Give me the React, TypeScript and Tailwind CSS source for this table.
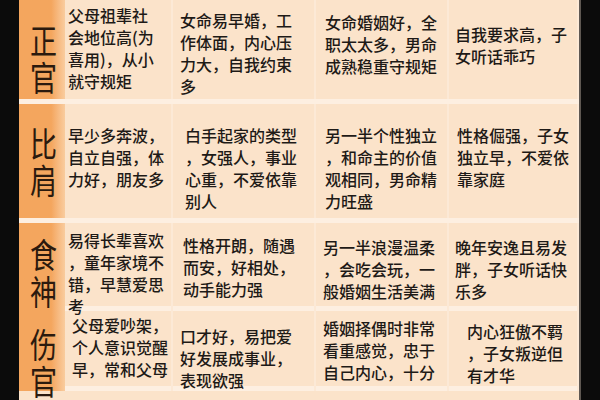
type Cell = { pad: string; lines: string[] };
type Row = { label: [string, string]; height: string; labelPad: string; cells: Cell[] };

const ROWS: Row[] = [
  {
    label: ['正', '官'],
    height: 'h-[104px]',
    labelPad: 'pt-[21px]',
    cells: [
      { pad: 'pt-[4px] pl-[3px]', lines: ['父母祖辈社', '会地位高(为', '喜用)，从小', '就守规矩'] },
      { pad: 'pt-[9px] pl-[7px]', lines: ['女命易早婚，工', '作体面，内心压', '力大，自我约束', '多'] },
      { pad: 'pt-[11px] pl-[9px]', lines: ['女命婚姻好，全', '职太太多，男命', '成熟稳重守规矩'] },
      { pad: 'pt-[23px] pl-[6px]', lines: ['自我要求高，子', '女听话乖巧'] },
    ],
  },
  {
    label: ['比', '肩'],
    height: 'h-[119px]',
    labelPad: 'pt-[20px]',
    cells: [
      { pad: 'pt-[20px] pl-[3px]', lines: ['早少多奔波，', '自立自强，体', '力好，朋友多'] },
      { pad: 'pt-[20px] pl-[12px]', lines: ['白手起家的类型', '，女强人，事业', '心重，不爱依靠', '别人'] },
      { pad: 'pt-[20px] pl-[9px]', lines: ['另一半个性独立', '，和命主的价值', '观相同，男命精', '力旺盛'] },
      { pad: 'pt-[20px] pl-[8px]', lines: ['性格倔强，子女', '独立早，不爱依', '靠家庭'] },
    ],
  },
  {
    label: ['食', '神'],
    height: 'h-[88px]',
    labelPad: 'pt-[12px]',
    cells: [
      { pad: 'pt-[6px] pl-[3px]', lines: ['易得长辈喜欢', '，童年家境不', '错，早慧爱思', '考'] },
      { pad: 'pt-[11px] pl-[10px]', lines: ['性格开朗，随遇', '而安，好相处，', '动手能力强'] },
      { pad: 'pt-[13px] pl-[7px]', lines: ['另一半浪漫温柔', '，会吃会玩，一', '般婚姻生活美满'] },
      { pad: 'pt-[13px] pl-[6px]', lines: ['晚年安逸且易发', '胖，子女听话快', '乐多'] },
    ],
  },
  {
    label: ['伤', '官'],
    height: 'h-[80px]',
    labelPad: 'pt-[14px]',
    cells: [
      { pad: 'pt-[3px] pl-[7px]', lines: ['父母爱吵架，', '个人意识觉醒', '早，常和父母'] },
      { pad: 'pt-[14px] pl-[7px]', lines: ['口才好，易把爱', '好发展成事业，', '表现欲强'] },
      { pad: 'pt-[6px] pl-[7px]', lines: ['婚姻择偶时非常', '看重感觉，忠于', '自己内心，十分'] },
      { pad: 'pt-[9px] pl-[18px]', lines: ['内心狂傲不羁', '，子女叛逆但', '有才华'] },
    ],
  },
];

const CJK = "font-['Noto_Sans_CJK_SC','Noto_Sans',sans-serif]";

export default function App() {
  return (
    <div className={`flex h-[400px] w-[600px] overflow-hidden bg-[#0b0b0b] ${CJK}`}>
      <div className="w-[19px] shrink-0" />
      <div className="flex h-[400px] w-[560px] shrink-0 flex-col overflow-hidden bg-[#fbe3ca]">
        {ROWS.map((row, i) => (
          <div
            key={i}
            className={`grid shrink-0 grid-cols-[46px_108px_143px_133px_130px] border-b-[5px] border-[#fdefe1] ${row.height}`}
          >
            <div
              className={`bg-linear-to-r from-[#f4a65e] from-70% to-[#f9cc9e] pl-[3px] text-center text-[27px] leading-[29.6px] text-[#2b1a0e] ${row.labelPad}`}
            >
              <div className="origin-top scale-y-125">
                {row.label[0]}
                <br />
                {row.label[1]}
              </div>
            </div>
            {row.cells.map((cell, j) => (
              <div
                key={j}
                className={`border-r-2 border-[#fce9d6] text-[16px] leading-[22px] font-medium text-[#1e1a17] ${cell.pad}`}
              >
                {cell.lines.map((line, k) => (
                  <div key={k} className="whitespace-nowrap">
                    {line}
                  </div>
                ))}
              </div>
            ))}
          </div>
        ))}
      </div>
      <div className="w-[2px] shrink-0 bg-[#5f5852]" />
    </div>
  );
}
